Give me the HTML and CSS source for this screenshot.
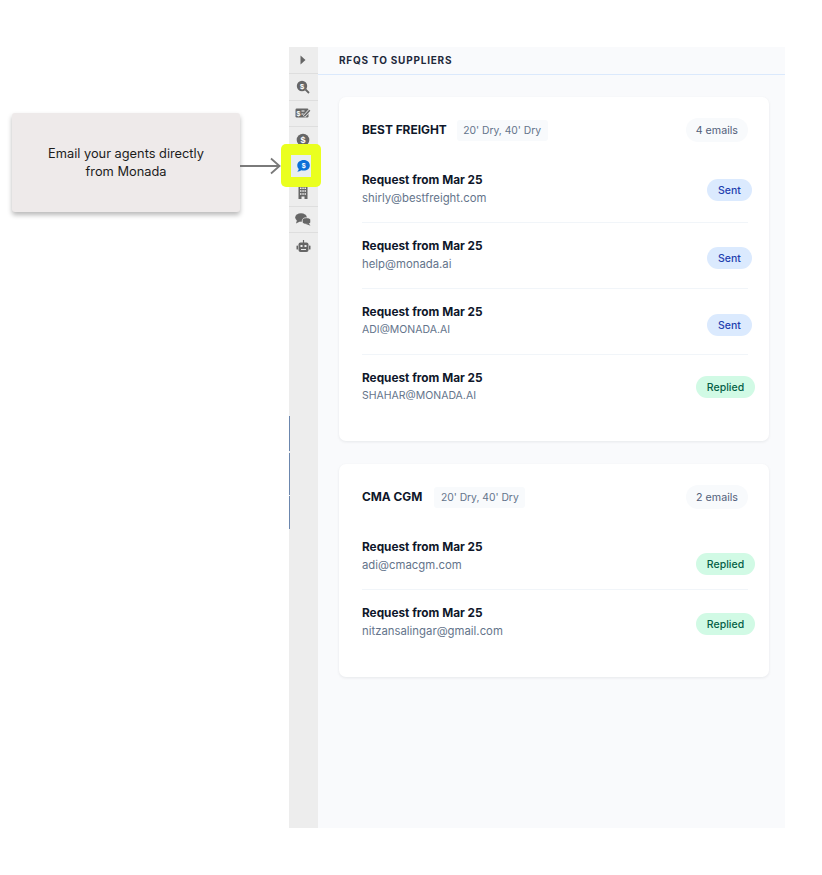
FILE: index.html
```html
<!DOCTYPE html>
<html lang="en">
<head>
<meta charset="utf-8">
<title>RFQs to suppliers</title>
<link rel="stylesheet" href="styles.css">
</head>
<body>
<div class="stage">
  <div class="callout">Email your agents directly<br>from Monada</div>
  <svg class="arrow" width="42" height="20" viewBox="0 0 42 20"><path d="M0 10H39M31 2.5L39.5 10L31 17.5" fill="none" stroke="#7a7a7a" stroke-width="1.8"/></svg>
  <div class="highlight"></div>
  <div class="edge edge-a"></div><div class="edge edge-b"></div><div class="edge edge-c"></div>

  <nav class="rail">
    <div class="rail-item rail-first"><svg width="12" height="12" viewBox="0 0 12 12"><path d="M3.5 1.5L8.5 6L3.5 10.5Z" fill="#666"/></svg></div>
    <div class="rail-item"><svg width="14" height="14" viewBox="0 0 14 14"><circle cx="6" cy="6" r="5.2" fill="#666"/><path d="M9.5 9.5L13 13" stroke="#666" stroke-width="1.8"/><text x="6" y="8.6" class="glyph" font-size="7.5">$</text></svg></div>
    <div class="rail-item"><svg width="16" height="12" viewBox="0 0 16 12"><rect x="0.5" y="1.5" width="13" height="9" rx="1.2" fill="#666"/><text x="3.5" y="8.6" class="glyph" font-size="7">$</text><path d="M6.5 4h3M6.5 7h2" stroke="#fff" stroke-width="1"/><path d="M9 9.5L14.5 3.5" stroke="#ededed" stroke-width="3"/><path d="M9.2 9.3L14.8 3.2" stroke="#666" stroke-width="1.6"/></svg></div>
    <div class="rail-item"><svg width="14" height="14" viewBox="0 0 14 14"><circle cx="7" cy="7" r="6.3" fill="#666"/><text x="7" y="10" class="glyph" font-size="9">$</text></svg></div>
    <div class="rail-item rail-active"><svg width="13" height="12" viewBox="0 0 13 12"><path d="M6.8 0C3.100 0 .3 2.300.3 5.400c0 1.400.6 2.600 1.500 3.500-.2 1-.8 1.900-1.600 2.700 1.600 0 3-.6 4.100-1.400.8.3 1.600.4 2.500.4 3.500 0 6-2.100 6-5.200S10.300 0 6.800 0z" fill="#0b6fd8"/><text x="6.800" y="8.300" class="glyph" font-size="7">$</text></svg></div>
    <div class="rail-item"><svg width="10" height="13" viewBox="0 0 10 13"><path d="M.5 0h9v13h-3v-2.500h-3V13h-3z" fill="#666"/><path d="M2 1.500h1.500V3H2zM4.300 1.500h1.500V3H4.300zM6.500 1.500H8V3H6.500zM2 4.300h1.500v1.500H2zM4.300 4.300h1.500v1.500H4.300zM6.500 4.300H8v1.500H6.500zM2 7.200h1.500v1.500H2zM4.300 7.200h1.500v1.500H4.300zM6.500 7.200H8v1.500H6.500z" fill="#ededed"/></svg></div>
    <div class="rail-item"><svg width="16" height="13" viewBox="0 0 16 13"><ellipse cx="6" cy="4.500" rx="5.800" ry="4.200" fill="#666"/><path d="M2 7L1 10.500L5 8.500Z" fill="#666"/><ellipse cx="11.500" cy="8" rx="4.300" ry="3.300" fill="#666" stroke="#ededed" stroke-width=".8"/><path d="M13.500 10L15.500 12.800L11 11Z" fill="#666"/></svg></div>
    <div class="rail-item"><svg width="15" height="13" viewBox="0 0 15 13"><path d="M7.500 0v3" stroke="#666" stroke-width="1.200"/><rect x="2.500" y="2.500" width="10" height="9.500" rx="2" fill="#666"/><rect x="0.500" y="5.500" width="1.500" height="4" rx=".6" fill="#666"/><rect x="13" y="5.500" width="1.500" height="4" rx=".6" fill="#666"/><rect x="4.500" y="5" width="2" height="2" fill="#ededed"/><rect x="8.500" y="5" width="2" height="2" fill="#ededed"/><path d="M5 9.500h5" stroke="#ededed" stroke-width="1"/></svg></div>
  </nav>

  <main class="panel">
    <header class="panel-head">RFQS TO SUPPLIERS</header>
    <div class="cards">
      <section class="card card-a">
        <div class="card-head">
          <h2 class="supplier">BEST FREIGHT</h2>
          <span class="tag">20' Dry, 40' Dry</span>
          <span class="count">4 emails</span>
        </div>
        <div class="row"><div><div class="req">Request from Mar 25</div><div class="mail">shirly@bestfreight.com</div></div><span class="badge sent off-11">Sent</span></div>
        <div class="row"><div><div class="req">Request from Mar 25</div><div class="mail">help@monada.ai</div></div><span class="badge sent off-13">Sent</span></div>
        <div class="row"><div><div class="req">Request from Mar 25</div><div class="mail mail-caps">ADI@MONADA.AI</div></div><span class="badge sent off-14">Sent</span></div>
        <div class="row"><div><div class="req">Request from Mar 25</div><div class="mail mail-caps">SHAHAR@MONADA.AI</div></div><span class="badge replied off-10">Replied</span></div>
      </section>
      <section class="card card-b">
        <div class="card-head">
          <h2 class="supplier">CMA CGM</h2>
          <span class="tag">20' Dry, 40' Dry</span>
          <span class="count">2 emails</span>
        </div>
        <div class="row"><div><div class="req">Request from Mar 25</div><div class="mail">adi@cmacgm.com</div></div><span class="badge replied off-18">Replied</span></div>
        <div class="row"><div><div class="req">Request from Mar 25</div><div class="mail">nitzansalingar@gmail.com</div></div><span class="badge replied off-12">Replied</span></div>
      </section>
    </div>
  </main>
</div>
</body>
</html>
```
FILE: styles.css
```css
* { box-sizing: border-box; }
html, body { margin: 0; background: #fff; }
body { font-family: Inter, "Noto Sans", sans-serif; color: #111827; }
.stage { position: relative; width: 822px; height: 875px; padding: 47px 37px 47px 289px; display: flex; overflow: hidden; }

.callout { position: absolute; left: 12px; top: 113px; width: 228px; height: 99px; background: #eeeaea; border-radius: 3px; box-shadow: 0 3px 5px rgba(0,0,0,.28); display: flex; align-items: center; justify-content: center; text-align: center; font-size: 12.8px; line-height: 18px; color: #1c1c1c; }
.arrow { position: absolute; left: 240px; top: 156px; }
.highlight { position: absolute; left: 281px; top: 144px; width: 40px; height: 43px; background: #eaff1f; border-radius: 5px; }
.edge { position: absolute; left: 289px; width: 1px; background: #6b86ad; }
.edge-a { top: 416px; height: 35px; }
.edge-b { top: 453px; height: 42px; }
.edge-c { top: 496px; height: 33px; }

.rail { width: 29px; background: #ededed; display: flex; flex-direction: column; }
.rail-item { height: 26.5px; border-bottom: 1px solid #dedede; display: flex; align-items: center; justify-content: center; padding-right: 1px; flex: none; }
.rail-first { height: 27px; }
.rail-item:last-child { border-bottom: 0; }
.rail-active { position: relative; background: #e8eef2; width: 20px; margin-left: 2px; height: 22px; margin-top: 1.5px; margin-bottom: 3px; border-bottom: 0; padding: 0 0 0 4px; }
.glyph { fill: #fff; font-family: "Liberation Sans", sans-serif; font-weight: 700; text-anchor: middle; }

.panel { flex: 1; background: #f9fafc; display: flex; flex-direction: column; }
.panel-head { height: 28px; border-bottom: 1px solid #dbe9fc; padding: 0 21px 2px; display: flex; align-items: center; font-size: 10px; font-weight: 700; letter-spacing: .78px; color: #1e293b; }
.cards { padding: 22px 16px 0 21px; display: flex; flex-direction: column; gap: 23px; }
.card { background: #fff; border-radius: 7px; box-shadow: 0 1px 3px rgba(15,23,42,.08); padding: 22px 21px 0 23px; }
.card-a { height: 344px; }
.card-b { height: 213px; }
.card-head { display: flex; align-items: center; height: 22px; margin-bottom: 29px; }
.supplier { margin: 0; font-size: 11.9px; line-height: 22px; font-weight: 700; color: #0f172a; }
.tag { margin-left: 10px; height: 21px; padding: 0 6.5px; background: #f8fafc; border-radius: 3px; display: flex; align-items: center; font-size: 10.3px; color: #64748b; }
.card-b .tag { margin-left: 12px; }
.count { margin-left: auto; height: 24px; padding: 0 10px; border-radius: 12px; background: #f8fafc; display: flex; align-items: center; font-size: 10.7px; color: #52607a; }

.row { height: 53px; margin-bottom: 13px; display: flex; justify-content: space-between; align-items: flex-start; border-bottom: 1px solid #f1f5f9; }
.row:last-child { border-bottom: 0; }
.req { font-size: 11.8px; line-height: 18px; font-weight: 700; color: #0f172a; margin-top: 1px; }
.mail { font-size: 11.35px; line-height: 18px; margin-top: 0; color: #64748b; }
.mail-caps { font-size: 10.5px; }
.badge { height: 22px; border-radius: 11px; font-size: 10.5px; font-weight: 500; display: flex; align-items: center; justify-content: center; }
.sent { width: 45px; background: #dbeafe; color: #1e40af; margin-right: -4px; }
.replied { width: 59px; background: #d1fae5; color: #065f46; margin-right: -7px; }
.off-10 { margin-top: 8px; }
.off-11 { margin-top: 9px; }
.off-12 { margin-top: 10px; }
.off-13 { margin-top: 11px; }
.off-14 { margin-top: 12px; }
.off-18 { margin-top: 16px; }
```
